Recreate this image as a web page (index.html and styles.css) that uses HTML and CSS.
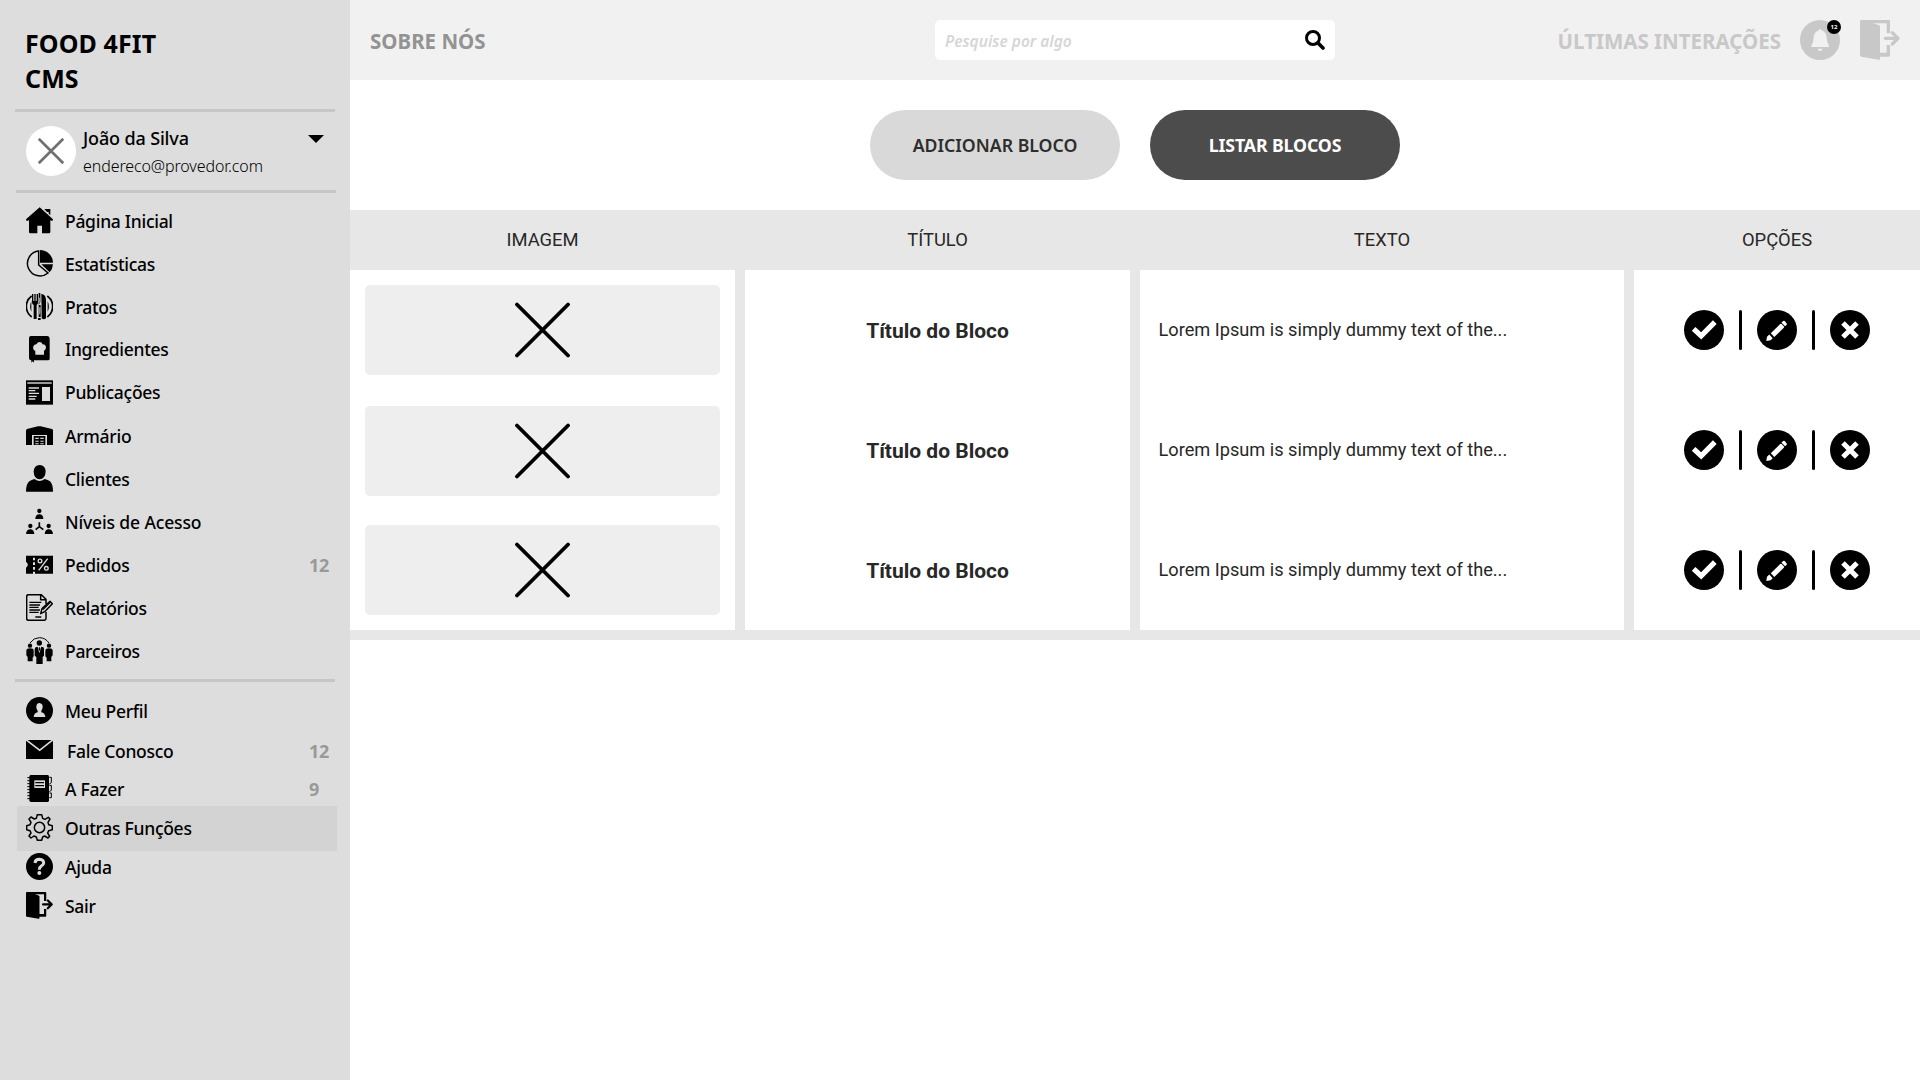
FILE: index.html
```html
<!DOCTYPE html>
<html lang="pt-BR">
<head>
<meta charset="utf-8">
<title>Food 4Fit CMS</title>
<link rel="stylesheet" href="styles.css">
</head>
<body>
<svg class="sprite" aria-hidden="true">
  <symbol id="door" viewBox="0 0 120 120">
    <path fill="currentColor" d="M0 4Q0 0 4 0H86Q90 0 90 4V40H80V10H40L56 15Q60 17 60 20V98H80V75H90V106Q90 110 86 110H60V116Q60 120 56 119L4 110Q0 109 0 105Z"/>
    <path fill="none" stroke="currentColor" stroke-width="10" stroke-linecap="round" stroke-linejoin="round" d="M76 55H114M97 38L114 55L97 72"/>
  </symbol>
  <symbol id="cross" viewBox="0 0 56 56">
    <path fill="none" stroke="currentColor" stroke-width="3.8" stroke-linecap="round" d="M2 2L54 54M54 2L2 54"/>
  </symbol>
  <symbol id="check" viewBox="0 0 40 40">
    <circle cx="20" cy="20" r="20"/>
    <path fill="none" stroke="#fff" stroke-width="5.2" d="M9.6 18.8L17.2 25.9L30.8 12.2"/>
  </symbol>
  <symbol id="pencil" viewBox="0 0 40 40">
    <circle cx="20" cy="20" r="20"/>
    <path fill="#fff" d="M13.8 23.2L23.2 14Q24 13.600 24.600 14L27 16.500Q27.300 17.200 26.800 17.800L17.300 27Z"/>
    <path fill="#fff" d="M24.400 12.600L26.300 10.900Q27 10.500 27.700 11L29.700 13.500Q30 14.500 29.500 15L28 16.300ZM12.300 24.500L15.700 28.300L13.600 30.200L9.300 31L10 26.800Z"/>
  </symbol>
  <symbol id="remove" viewBox="0 0 40 40">
    <circle cx="20" cy="20" r="20"/>
    <path fill="none" stroke="#fff" stroke-width="5" d="M13 13L27 27M27 13L13 27"/>
  </symbol>
</svg>

<div class="app">
  <aside class="sidebar">
    <h1 class="brand">FOOD 4FIT<br>CMS</h1>
    <hr class="rule">
    <div class="profile">
      <span class="avatar"><svg class="avatar-mark" viewBox="0 0 26 26"><path fill="none" stroke="#707070" stroke-width="2.700" d="M.8.8L25.200 25.200M25.200.8L.8 25.200"/></svg></span>
      <div class="who"><div class="who-name">João da Silva</div><div class="who-mail">endereco@provedor.com</div></div>
      <svg class="caret" viewBox="0 0 16 8"><path d="M0 0H16L8 8Z"/></svg>
    </div>
    <hr class="rule rule-shift">

    <nav class="menu menu-main">
      <a class="item"><svg class="icon" viewBox="0 0 81 81"><path d="M41 1L0 37L2 42L9 40V75Q9 79 13 79H34V56H48V79H69Q73 79 73 75V40L79 42L81 37Z"/><path d="M55 6H73V24L68 20V15H63Z"/></svg><span>Página Inicial</span></a>
      <a class="item"><svg class="icon" viewBox="0 0 81 81"><path fill="none" stroke="#000" stroke-width="4.500" d="M38 3A37.500 37.500 0 1 0 66 69L38 45Z"/><path d="M42 0A39 39 0 0 1 81 38H42ZM46 43H81A39 39 0 0 1 71 67Z"/></svg><span>Estatísticas</span></a>
      <a class="item"><svg class="icon" viewBox="0 0 81 81"><path fill="none" stroke="#000" stroke-width="5" d="M17 9A39 39 0 0 0 17 72M64 9A39 39 0 0 1 64 72"/><path d="M16 24V57Q9 41 16 24ZM65 24V57Q72 41 65 24Z"/><path d="M18 3H22V24H25V3H29V24H32V3H36V28Q36 34 32 36V78H23V36Q18 34 18 28ZM46 3Q60 4 60 22V76Q53 82 47 76ZM38 0H43V28L38 36ZM38 36H44V72H38ZM36 75H44V81H36Z"/><path fill="#ddd" d="M40 14H42V28L40 32ZM40 43H43V60L40 66Z"/></svg><span>Pratos</span></a>
      <a class="item item-up"><svg class="icon" viewBox="0 0 81 81"><path d="M14 0H64Q71 1 71 8V68Q71 73 66 73H24V80L20 76L16 80V73Q9 73 9 67V5Q10 0 14 0Z"/><path fill="#ddd" d="M28 56V45Q19 41 22 31Q25 25 31 25Q35 18 41 18Q47 18 50 25Q58 25 60 32Q61 41 54 45V56Z"/></svg><span>Ingredientes</span></a>
      <a class="item item-up"><svg class="icon" viewBox="0 0 81 81"><path d="M0 4H81V77H0Z"/><path fill="#999" d="M4 9H77V15H4Z"/><path fill="#ddd" d="M48 24H72V66H48ZM8 25H39V29H8ZM8 33H28V37H8ZM8 41H39V45H8ZM8 50H32V54H8ZM8 58H28V62H8Z"/></svg><span>Publicações</span></a>
      <a class="item"><svg class="icon" viewBox="0 0 81 81"><path d="M0 26Q0 23 3 21L36 13Q40 12 44 13L78 21Q81 22 81 26V69H63V39H18V69H0Z"/><path d="M23 42H58V69H23Z"/><path fill="#ddd" d="M28 47H38V51H28ZM43 47H53V51H43ZM28 56H38V59H28ZM43 56H53V59H43ZM28 64H38V67H28ZM43 64H53V67H43Z"/></svg><span>Armário</span></a>
      <a class="item"><svg class="icon" viewBox="0 0 81 81"><path d="M41 0Q58 0 59 20Q57 42 41 43Q24 42 23 20Q24 0 41 0ZM0 80Q0 57 10 49Q17 44 25 42Q41 54 56 42Q66 44 72 49Q81 57 81 80Z"/></svg><span>Clientes</span></a>
      <a class="item"><svg class="icon" viewBox="0 0 81 81"><circle cx="40" cy="9" r="6.500"/><circle cx="13" cy="54" r="6.500"/><circle cx="68" cy="54" r="6.500"/><path d="M28 33Q28 19 40 19Q52 19 52 33ZM0 78Q1 64 13 64Q24 64 25 78ZM56 78Q57 64 68 64Q80 64 81 78Z"/><path fill="none" stroke="#000" stroke-width="5" d="M40 43V56L29 65M40 56L52 65"/></svg><span class="wide">Níveis de Acesso</span></a>
      <a class="item"><svg class="icon" viewBox="0 0 81 81"><path d="M0 14H21V68H0V50Q11 41 0 32ZM27 14H81V68H27ZM21 14H27V20H21ZM21 28H27V34H21ZM21 42H27V48H21ZM21 56H27V62H21Z"/><path fill="none" stroke="#ddd" stroke-width="4" d="M65 23L38 58"/><circle cx="42" cy="30" r="5.500" fill="none" stroke="#ddd" stroke-width="4"/><circle cx="61" cy="52" r="5.500" fill="none" stroke="#ddd" stroke-width="4"/></svg><span>Pedidos</span><b class="count">12</b></a>
      <a class="item"><svg class="icon" viewBox="0 0 81 81"><path fill="none" stroke="#000" stroke-width="4.500" stroke-linejoin="round" d="M60 54V73Q60 79 54 79H8Q2 79 2 73V8Q2 2 8 2H46L60 16V30M44 3V17H59M44 59L48 44L72 22L79 29L56 53Z"/><path fill="none" stroke="#000" stroke-width="4" d="M10 25H46M10 33H42M10 40H38M10 48H42M10 55H38M28 69H46M50 47L73 25"/></svg><span>Relatórios</span></a>
      <a class="item"><svg class="icon" viewBox="0 0 81 81"><path fill="none" stroke="#000" stroke-width="3" d="M12 18Q23 2 40 2Q58 2 69 18"/><circle cx="40" cy="18" r="8"/><circle cx="12" cy="26" r="6.500"/><circle cx="69" cy="26" r="6.500"/><path d="M26 36Q27 29 35 29L40 49L46 29Q54 29 54 36V56L50 60V81H31V60L26 56ZM39 31H42L43 36L40 43L38 36ZM1 41Q2 34 12 34Q23 34 23 41V58L20 62V73H5V60L1 55ZM58 41Q59 34 69 34Q80 34 80 41V55L76 60V73H62V62L58 58Z"/></svg><span>Parceiros</span></a>
    </nav>
    <hr class="rule">
    <nav class="menu menu-extra">
      <a class="item"><svg class="icon" viewBox="0 0 81 81"><circle cx="40.500" cy="40.500" r="40.500"/><path fill="#ddd" d="M40 18Q51 19 50 31Q49 39 46 41V46Q57 48 58 60H23Q24 48 35 46V41Q31 38 31 30Q31 19 40 18Z"/></svg><span>Meu Perfil</span></a>
      <a class="item item-mail"><svg class="icon" viewBox="0 0 81 81"><path d="M5 12H76L41 40ZM0 14L41 46L81 14V69H0Z"/></svg><span>Fale Conosco</span><b class="count">12</b></a>
      <a class="item"><svg class="icon" viewBox="0 0 81 81"><path d="M14 0H65Q69 1 69 5V76Q69 81 65 81H14Q10 80 10 76V5Q10 0 14 0Z"/><path fill="none" stroke="#000" stroke-width="3" d="M4 8H14M4 17H14M4 26H14M4 35H14M4 44H14M4 53H14M4 62H14M4 71H14M70 7H76V23L70 27M70 31H76V46L70 50M70 54H76V68H70"/><path fill="#ddd" d="M25 16H57V39H25Z"/><path d="M28 21H54V25H28ZM28 30H54V34H28Z"/></svg><span>A Fazer</span><b class="count">9</b></a>
      <a class="item item-active"><svg class="icon" viewBox="0 0 81 81"><g fill="none" stroke="#000" stroke-width="4.500" stroke-linejoin="round"><path d="M34 2H47L50 13L57 16L67 10L72 15L66 25L68 32L79 35V47L68 50L65 57L71 67L66 72L56 66L50 69L47 79H34L31 69L24 66L15 72L9 66L15 57L12 50L2 47V35L12 32L15 25L9 15L15 9L25 15L31 13Z"/><circle cx="40.500" cy="40.500" r="15.500"/></g></svg><span>Outras Funções</span></a>
      <a class="item"><svg class="icon" viewBox="0 0 81 81"><circle cx="40.500" cy="40.500" r="40.500"/><path fill="none" stroke="#ddd" stroke-width="9" d="M27 30Q28 19 40 19Q53 20 53 30Q53 35 46 39Q40 43 40 50"/><circle cx="40" cy="60" r="6" fill="#ddd"/></svg><span>Ajuda</span></a>
      <a class="item"><svg class="icon"><use href="#door"/></svg><span>Sair</span></a>
    </nav>
  </aside>

  <main class="main">
    <header class="topbar">
      <h2 class="page-name">SOBRE NÓS</h2>
      <label class="search">
        <input class="search-input" type="text" placeholder="Pesquise por algo">
        <svg class="search-icon" viewBox="0 0 20 20"><circle cx="8" cy="8" r="6.500" fill="none" stroke="#000" stroke-width="3"/><path d="M12.800 12.800L18 18" stroke="#000" stroke-width="3.600" stroke-linecap="round"/></svg>
      </label>
      <div class="actions">
        <span class="actions-label">ÚLTIMAS INTERAÇÕES</span>
        <span class="bell">
          <svg class="bell-icon" viewBox="0 0 120 120"><circle cx="60" cy="60" r="60" fill="#c8c8c8"/><path fill="#f1f1f1" d="M57 31Q57 27 60 27Q63 27 64 31Q79 36 80 52Q80 68 87 77V81H34V77Q41 68 41 52Q42 36 57 31ZM53 86H68Q66 93 60 93Q55 93 53 86Z"/></svg>
          <b class="badge">12</b>
        </span>
        <svg class="exit"><use href="#door"/></svg>
      </div>
    </header>

    <div class="buttons">
      <button class="btn">ADICIONAR BLOCO</button>
      <button class="btn btn-dark">LISTAR BLOCOS</button>
    </div>

    <section class="table">
      <div class="cols head"><div>IMAGEM</div><div>TÍTULO</div><div>TEXTO</div><div>OPÇÕES</div></div>
      <div class="cols body">
        <div class="col col-image">
          <div class="cell"><div class="thumb"><svg class="thumb-mark"><use href="#cross"/></svg></div></div>
          <div class="cell cell-low"><div class="thumb"><svg class="thumb-mark"><use href="#cross"/></svg></div></div>
          <div class="cell"><div class="thumb"><svg class="thumb-mark"><use href="#cross"/></svg></div></div>
        </div>
        <div class="col col-title">
          <div class="cell">Título do Bloco</div>
          <div class="cell">Título do Bloco</div>
          <div class="cell">Título do Bloco</div>
        </div>
        <div class="col col-text">
          <div class="cell">Lorem Ipsum is simply dummy text of the...</div>
          <div class="cell">Lorem Ipsum is simply dummy text of the...</div>
          <div class="cell">Lorem Ipsum is simply dummy text of the...</div>
        </div>
        <div class="col col-options">
          <div class="cell"><svg class="opt"><use href="#check"/></svg><i class="bar"></i><svg class="opt"><use href="#pencil"/></svg><i class="bar"></i><svg class="opt"><use href="#remove"/></svg></div>
          <div class="cell"><svg class="opt"><use href="#check"/></svg><i class="bar"></i><svg class="opt"><use href="#pencil"/></svg><i class="bar"></i><svg class="opt"><use href="#remove"/></svg></div>
          <div class="cell"><svg class="opt"><use href="#check"/></svg><i class="bar"></i><svg class="opt"><use href="#pencil"/></svg><i class="bar"></i><svg class="opt"><use href="#remove"/></svg></div>
        </div>
      </div>
    </section>
  </main>
</div>
</body>
</html>
```
FILE: styles.css
```css
* { box-sizing: border-box; }
body { margin: 0; background: #fff; color: #000; font-family: "Noto Sans", "Open Sans", sans-serif; }
svg { display: block; flex: none; }
.sprite { display: none; }
.app { display: flex; height: 1080px; }

/* Sidebar */
.sidebar { width: 350px; flex: none; background: #ddd; padding-top: 26px; }
.brand { margin: 0 0 13px 25px; font-size: 25px; line-height: 35px; font-weight: 700; letter-spacing: .1px; }
.rule { width: 320px; height: 3px; margin: 0 0 0 15.4px; border: 0; background: #c6c6c6; }
.rule-shift { margin-left: 16.4px; }
.profile { display: flex; align-items: center; height: 78px; padding-left: 26px; padding-right: 26px; }
.avatar { display: flex; align-items: center; justify-content: center; width: 50px; height: 50px; border-radius: 50%; background: #fff; }
.avatar-mark { width: 26px; height: 26px; }
.who { flex: 1; margin-left: 7px; }
.who-name { font-size: 18px; font-weight: 500; line-height: 28px; letter-spacing: -.15px; }
.who-mail { padding-top: 1px; margin-bottom: -1px; font-size: 16px; font-weight: 300; line-height: 26px; letter-spacing: -.1px; }
.caret { width: 16px; height: 8px; margin-bottom: 24px; }

.menu { display: flex; flex-direction: column; }
.menu-main { padding: 6px 0 7px; }
.menu-extra { padding-top: 9px; }
.item { display: flex; align-items: center; height: 43px; padding: 0 20px 0 26px; font-size: 17.5px; font-weight: 500; letter-spacing: -.28px; line-height: 24px; }
.menu-extra .item { height: 39px; }
.icon { width: 27px; height: 27px; margin-right: 12px; }
.item span, .count { padding-top: 1px; }
.item-up span { padding: 0 0 1px; }
.item-mail span { padding: 2px 0 0 2px; }
.item-mail .count { padding-top: 2px; }
.wide { letter-spacing: -.14px; }
.count { width: 21px; margin-left: auto; color: #999; font-weight: 700; font-size: 18px; }
.menu-extra .item-active { height: 45px; margin: -2px 13px -4px 17px; padding: 0 0 2px 9px; background: #d3d3d3; }

/* Top bar */
.main { flex: 1; }
.topbar { display: grid; grid-template-columns: 1fr 400px 1fr; align-items: center; height: 80px; padding: 0 20px; background: #f1f1f1; }
.page-name { margin: 0; padding-top: 1px; font-size: 20.5px; font-weight: 700; color: #939393; }
.search { display: flex; align-items: center; height: 40px; padding: 0 10px; border-radius: 5px; background: #fff; }
.search-input { flex: 1; min-width: 0; height: 40px; padding: 2px 0 0; border: 0; outline: 0; background: none; font: italic 600 15.500px "Noto Sans", "Open Sans", sans-serif; }
.search-input::placeholder { color: #d6d6d6; opacity: 1; }
.search-icon { width: 20px; height: 20px; }
.actions { display: flex; align-items: center; justify-content: flex-end; }
.actions-label { padding-top: 1px; margin-right: 19px; font-size: 20.5px; font-weight: 700; color: #c8c8c8; white-space: nowrap; }
.bell { position: relative; margin-right: 20px; }
.bell-icon, .exit { width: 40px; height: 40px; color: #c8c8c8; }
.badge { position: absolute; top: 0; right: -1px; width: 14px; height: 14px; border-radius: 50%; background: #000; color: #fff; font-size: 6px; line-height: 14px; text-align: center; }

/* Page buttons */
.buttons { display: flex; justify-content: center; gap: 30px; padding: 30px 0; }
.btn { width: 250px; height: 70px; padding: 0; border: 0; border-radius: 35px; background: #d9d9d9; color: #2d2d2d; font: 600 17.700px "Noto Sans", "Open Sans", sans-serif; }
.btn-dark { background: #4c4c4c; color: #fff; font-weight: 700; letter-spacing: -.1px; }

/* Blocks table */
.table { background: #e7e7e7; padding-bottom: 10px; font-family: Roboto, sans-serif; color: #282828; }
.cols { display: grid; grid-template-columns: 385px 385px 484px 286px; column-gap: 10px; }
.head { height: 60px; padding-bottom: 2px; align-items: center; text-align: center; font-size: 18.400px; }
.col { background: #fff; }
.cell { display: flex; align-items: center; height: 120px; }
.col-image .cell { padding: 0 15px; }
.col-image .cell-low { padding-top: 2px; }
.thumb { display: flex; align-items: center; justify-content: center; width: 100%; height: 90px; border-radius: 5px; background: #eee; color: #000; }
.thumb-mark { width: 55px; height: 56px; }
.col-title .cell { justify-content: center; padding-top: 2px; font-size: 21px; font-weight: 700; }
.col-text .cell { padding: 0 0 2px 18.500px; font-size: 18.200px; }
.col-options .cell { justify-content: center; gap: 15px; }
.opt { width: 40px; height: 40px; }
.bar { width: 3px; height: 40px; border-radius: 1.500px; background: #000; }
```
